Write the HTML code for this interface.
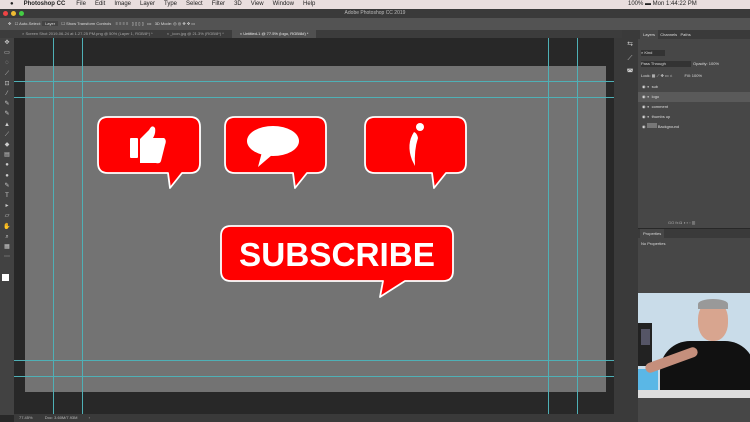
<!DOCTYPE html><html><head><style>
*{margin:0;padding:0;box-sizing:border-box}
body{width:750px;height:422px;overflow:hidden;background:#282828;font-family:"Liberation Sans",sans-serif;position:relative;font-size:5px;color:#ccc}
.a{position:absolute}
.g{position:absolute;background:#4fb0b6}
</style></head><body>
<div class="a" style="left:0;top:0;width:750px;height:9px;background:#e9dede;color:#222;font-size:6px;line-height:9px;white-space:nowrap">
<span style="margin-left:10px">●</span><b style="margin-left:10px">Photoshop CC</b><span style="margin-left:11px">File</span><span style="margin-left:9px">Edit</span><span style="margin-left:9px">Image</span><span style="margin-left:9px">Layer</span><span style="margin-left:9px">Type</span><span style="margin-left:9px">Select</span><span style="margin-left:9px">Filter</span><span style="margin-left:9px">3D</span><span style="margin-left:9px">View</span><span style="margin-left:9px">Window</span><span style="margin-left:9px">Help</span>
<span style="position:absolute;left:628px">100% ▬  Mon 1:44:22 PM</span></div>
<div class="a" style="left:0;top:9px;width:750px;height:9px;background:#3a3a3a;color:#bbb;font-size:5px;line-height:9px;text-align:center">Adobe Photoshop CC 2019
<span class="a" style="left:3px;top:2px;width:5px;height:5px;border-radius:50%;background:#e44"></span><span class="a" style="left:11px;top:2px;width:5px;height:5px;border-radius:50%;background:#eb3"></span><span class="a" style="left:19px;top:2px;width:5px;height:5px;border-radius:50%;background:#4c4"></span></div>
<div class="a" style="left:0;top:18px;width:750px;height:12px;background:#535353;font-size:4px;line-height:12px;color:#ddd;white-space:nowrap;padding-left:8px">✥ &nbsp; ☐ Auto-Select: <span style="background:#444;padding:0 3px">Layer</span> &nbsp; ☐ Show Transform Controls &nbsp;&nbsp; ≡ ≡ ≡ ≡ &nbsp; ▯ ▯ ▯ ▯ &nbsp; ••• &nbsp; 3D Mode: ◎ ◎ ✥ ✥ ▭</div>
<div class="a" style="left:0;top:30px;width:622px;height:8px;background:#3c3c3c;font-size:4px;line-height:8px;color:#aaa;white-space:nowrap">
<span style="margin-left:22px">× Screen Shot 2019-06-24 at 1.27.25 PM.png @ 50% (Layer 1, RGB/8*) *</span><span style="margin-left:14px">× _icon.jpg @ 21.3% (RGB/8*) *</span><span style="margin-left:8px;background:#505050;color:#eee;padding:0 8px;display:inline-block">× Untitled-1 @ 77.5% (logo, RGB/8#) *</span></div>
<div class="a" style="left:0;top:38px;width:14px;height:377px;background:#424242;color:#ccc;font-size:6px;line-height:10.2px;text-align:center">✥<br>▭<br>◌<br>⟋<br>⊡<br>⁄<br>✎<br>✎<br>▲<br>⟋<br>◆<br>▤<br>●<br>●<br>✎<br>T<br>▸<br>▱<br>✋<br>⌕<br>▦<br>⋯
<div class="a" style="left:2px;top:236px;width:7px;height:7px;background:#fff"></div><div class="a" style="left:5px;top:239px;width:7px;height:7px;background:#000;z-index:-1"></div></div>
<div class="a" style="left:25px;top:66px;width:581px;height:326px;background:#737373"></div>
<div class="g" style="left:14px;top:81px;width:600px;height:1px"></div>
<div class="g" style="left:14px;top:97px;width:600px;height:1px"></div>
<div class="g" style="left:14px;top:360px;width:600px;height:1px"></div>
<div class="g" style="left:14px;top:376px;width:600px;height:1px"></div>
<div class="g" style="left:53px;top:38px;width:1px;height:377px"></div>
<div class="g" style="left:82px;top:38px;width:1px;height:377px"></div>
<div class="g" style="left:548px;top:38px;width:1px;height:377px"></div>
<div class="g" style="left:577px;top:38px;width:1px;height:377px"></div>
<div class="a" style="left:614px;top:38px;width:8px;height:384px;background:#3a3a3a"></div>
<div class="a" style="left:14px;top:414px;width:600px;height:8px;background:#3a3a3a;font-size:4px;line-height:8px;color:#bbb;padding-left:5px">77.45% &nbsp;&nbsp;&nbsp;&nbsp;&nbsp;&nbsp;&nbsp;&nbsp;&nbsp; Doc: 3.60M/7.93M &nbsp;&nbsp;&nbsp;&nbsp;&nbsp;&nbsp;&nbsp;&nbsp; ›</div>
<svg class="a" style="left:0;top:0" width="750" height="422">
<g fill="#f00" stroke="#fff" stroke-width="1.8" stroke-linejoin="round">
<path d="M108 117H190Q200 117 200 127V163Q200 173 190 173H182L170 188L168 173H108Q98 173 98 163V127Q98 117 108 117Z"/>
<path d="M235 117H316Q326 117 326 127V163Q326 173 316 173H307L295 188L293 173H235Q225 173 225 163V127Q225 117 235 117Z"/>
<path d="M375 117H456Q466 117 466 127V163Q466 173 456 173H446L434 188L432 173H375Q365 173 365 163V127Q365 117 375 117Z"/>
<path d="M231 226H443Q453 226 453 236V271Q453 281 443 281H405L380 297L383 281H231Q221 281 221 271V236Q221 226 231 226Z"/>
</g>
<g fill="#fff">
<rect x="130" y="138" width="8" height="20" rx="1"/>
<path d="M140 139L149 130Q152 124 155 128Q156 133 153 138H164Q167 140 165 145L161 161Q160 164 156 163H140Z"/>
<ellipse cx="273" cy="141" rx="26" ry="15"/>
<path d="M262 152L258 167L272 155Z"/>
<circle cx="420" cy="127" r="4"/>
<path d="M414 132Q406 144 412 160L415 166Q414 150 418 138Q417 133 414 132Z"/>
</g>
<text x="337" y="266" text-anchor="middle" font-family="Liberation Sans" font-weight="bold" font-size="33" fill="#fff" textLength="196" lengthAdjust="spacingAndGlyphs">SUBSCRIBE</text>
</svg>
<div class="a" style="left:622px;top:30px;width:16px;height:392px;background:#3a3a3a;color:#ccc;font-size:7px;text-align:center;line-height:14px;padding-top:8px">⇆<br>⟋<br>◚</div>
<div class="a" style="left:638px;top:30px;width:112px;height:198px;background:#474747;font-size:4px;color:#ddd">
<div style="height:9px;background:#3a3a3a;line-height:9px;padding-left:2px;white-space:nowrap"><span style="background:#474747;padding:0 3px;display:inline-block">Layers</span> &nbsp;Channels &nbsp; Paths</div>
<div style="position:absolute;top:20px;left:3px;width:24px;height:6px;background:#333"> ⌕ Kind</div>
<div style="position:absolute;top:31px;left:3px;width:50px;height:6px;background:#333">Pass Through</div>
<div style="position:absolute;top:31px;left:55px">Opacity: 100%</div>
<div style="position:absolute;top:43px;left:3px">Lock: ▦ ⟋ ✥ ▭ ⌂ &nbsp;&nbsp;&nbsp;&nbsp;&nbsp;&nbsp;&nbsp;&nbsp;&nbsp; Fill: 100%</div>
<div style="position:absolute;top:52px;left:0;width:112px;line-height:10px">
<div style="padding-left:4px">◉ ›▪ &nbsp;sub</div>
<div style="padding-left:4px;background:#5a5a5a">◉ ›▪ &nbsp;logo</div>
<div style="padding-left:4px">◉ ›▪ &nbsp;comment</div>
<div style="padding-left:4px">◉ ›▪ &nbsp;thumbs up</div>
<div style="padding-left:4px">◉ <span style="background:#777;display:inline-block;width:10px;height:5px"></span> Background</div></div>
<div style="position:absolute;top:190px;left:30px;color:#aaa">GO fx ◘ ◑ ▪ ▫ ▥</div>
</div>
<div class="a" style="left:638px;top:229px;width:112px;height:64px;background:#474747;font-size:4px;color:#ddd">
<div style="height:9px;background:#3a3a3a;line-height:9px;padding-left:2px"><span style="background:#474747;padding:0 3px;display:inline-block">Properties</span></div>
<div style="padding:3px">No Properties</div></div>
<div class="a" style="left:638px;top:293px;width:112px;height:105px;background:#c9dce9;overflow:hidden">
<div class="a" style="left:0;top:30px;width:14px;height:43px;background:#222"></div>
<div class="a" style="left:3px;top:36px;width:9px;height:16px;background:#556"></div>
<div class="a" style="left:0;top:76px;width:20px;height:22px;background:#5ab7e6"></div>
<div class="a" style="left:22px;top:48px;width:95px;height:52px;background:#111;border-radius:30px 30px 0 0"></div>
<div class="a" style="left:60px;top:8px;width:30px;height:40px;background:#d8a58f;border-radius:45%"></div>
<div class="a" style="left:60px;top:6px;width:30px;height:10px;background:#999;border-radius:50% 50% 0 0"></div>
<div class="a" style="left:6px;top:62px;width:55px;height:10px;background:#c58f7c;border-radius:5px;transform:rotate(-20deg)"></div>
<div class="a" style="left:0;top:97px;width:112px;height:8px;background:#ddd"></div>
</div>
<div class="a" style="left:638px;top:398px;width:112px;height:24px;background:#474747"></div>
</body></html>
